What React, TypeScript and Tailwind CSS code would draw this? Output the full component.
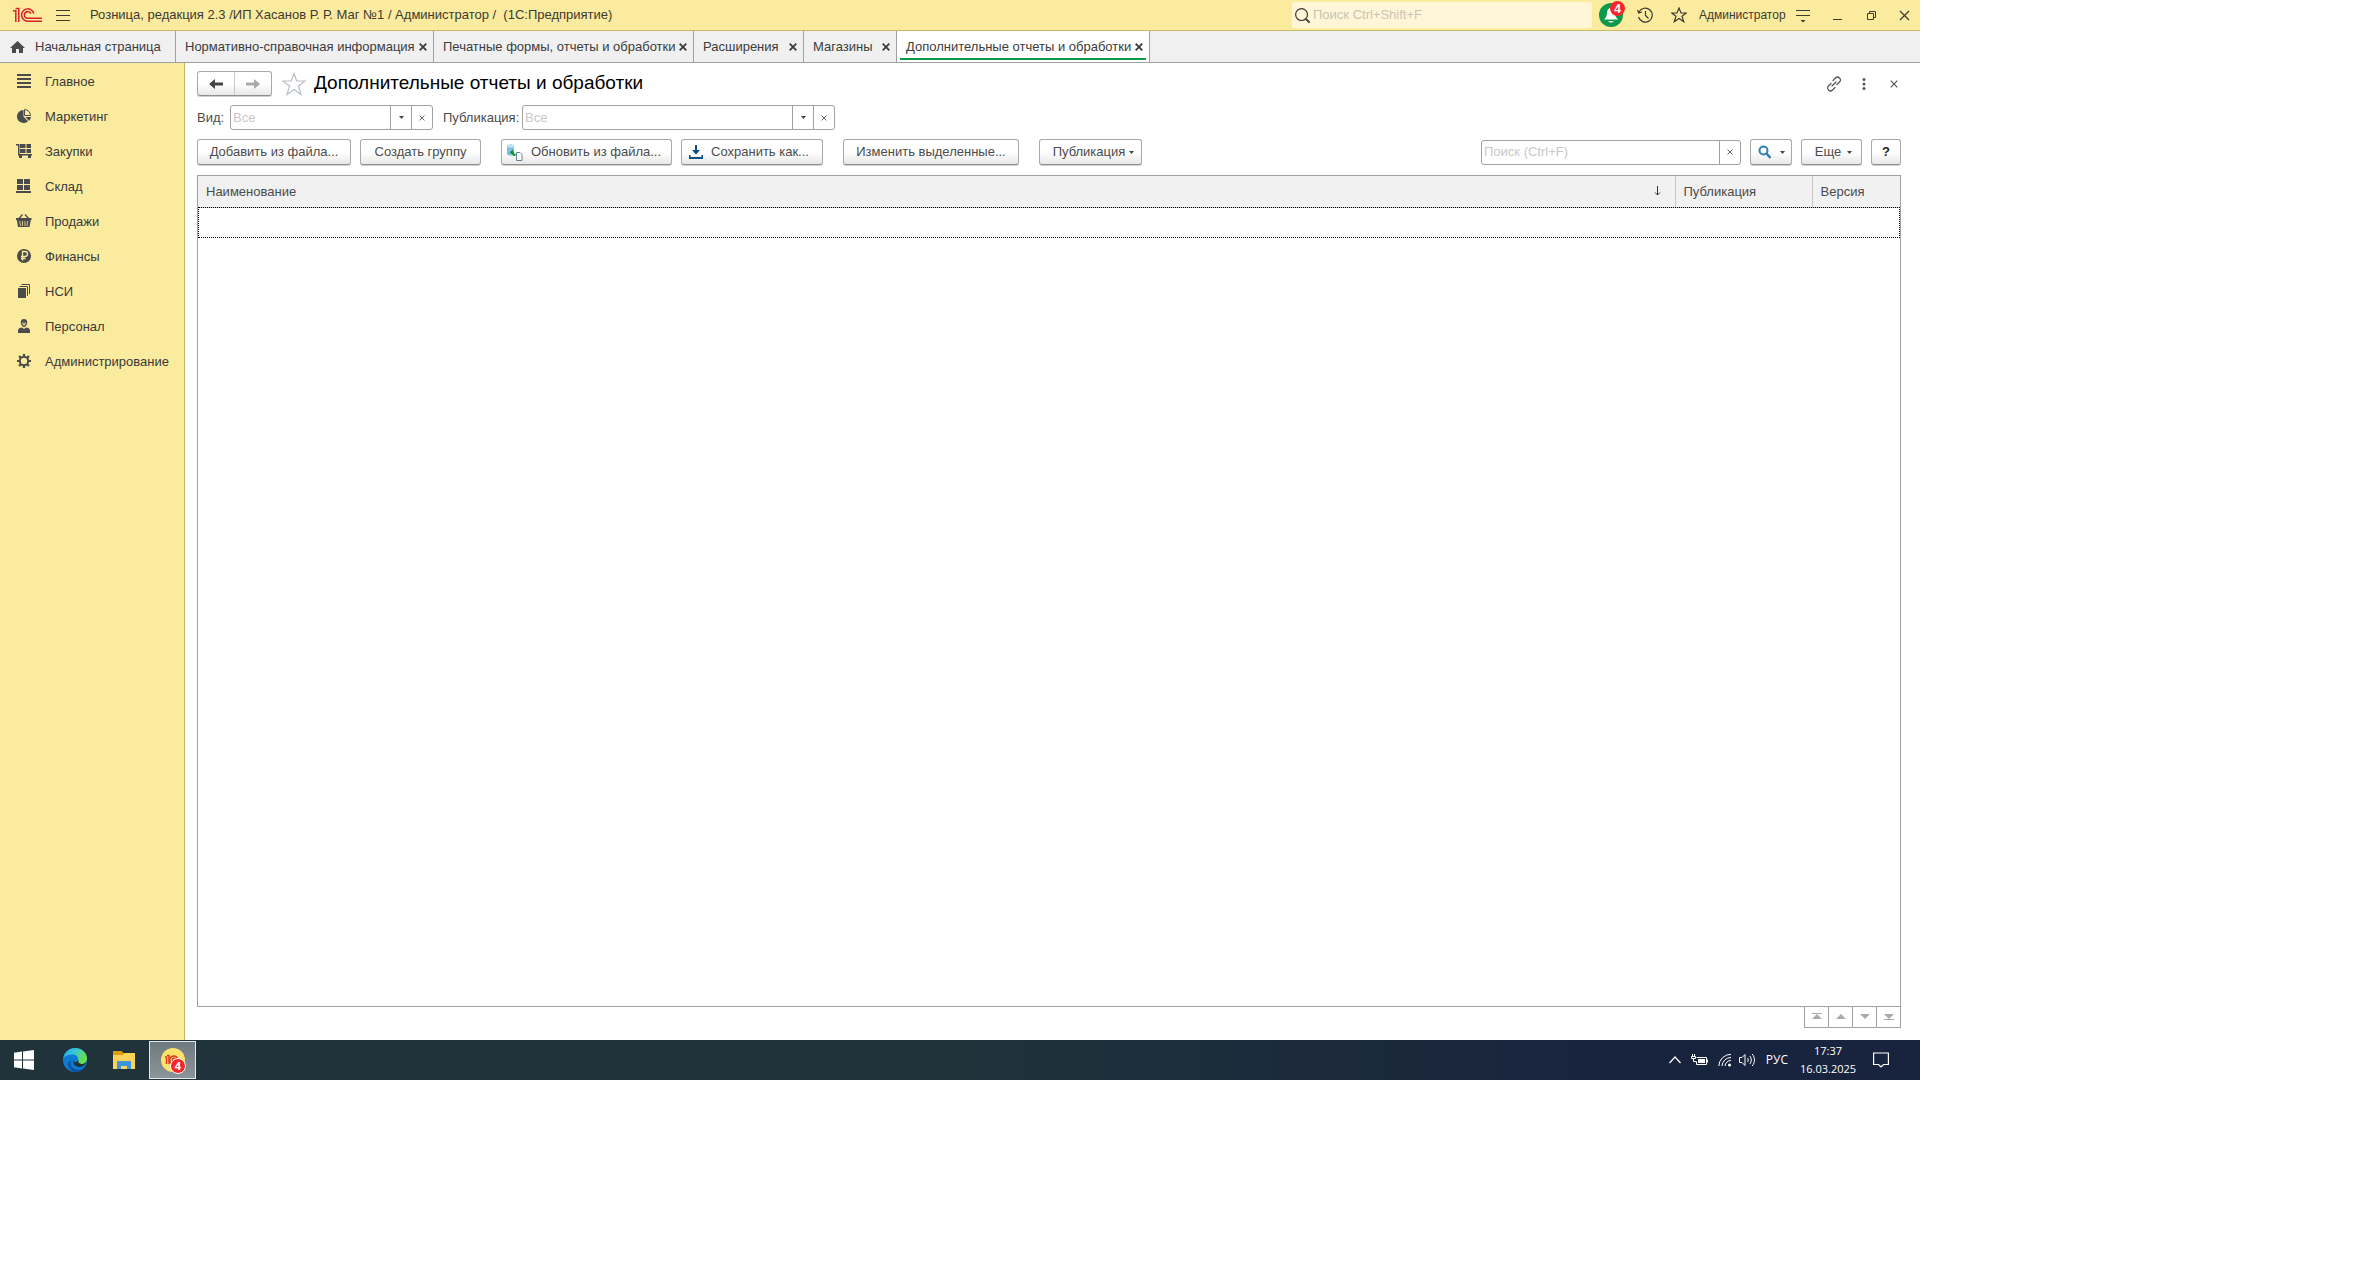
import { useState } from "react";
import type { ReactNode } from "react";

const MENU: { name: string; icon: ReactNode }[] = [
  {
    name: "Главное",
    icon: <path d="M1 1h14v2H1zM1 5h14v2H1zM1 9h14v2H1zM1 13h14v2H1z" />,
  },
  {
    name: "Маркетинг",
    icon: (
      <>
        <path d="M7.500 2A6.500 6.500 0 1 0 12 13.200L7.500 8.500z" />
        <path d="M8.500 1.500v6h6a6 6 0 0 0-6-6z" fill="none" stroke="currentColor" />
        <path d="M9.500 9H15a6 6 0 0 1-2 4z" />
      </>
    ),
  },
  {
    name: "Закупки",
    icon: (
      <path d="M0 1h3.500v10H16v1.500H2V2.500H0zM4 1h5.500v4H4zM10.500 1H15v4h-4.500zM4 6h5.500v4H4zM10.500 6H15v4h-4.500zM3 12.500h3V15H3zM12 12.500h3V15h-3z" />
    ),
  },
  {
    name: "Склад",
    icon: <path d="M1 1h6v5H1zM8 1h6v5H8zM1 7h6v5H1zM8 7h6v5H8zM0 13h15v2H0z" />,
  },
  {
    name: "Продажи",
    icon: (
      <>
        <path d="M3 5.500 6.500 1.500M12.500 5.500 9 1.500" fill="none" stroke="currentColor" strokeWidth="1.300" />
        <path d="M0 5h15.500v2h-.7l-1.300 7H2L.8 7H0z" />
        <path d="M3.800 8l.7 5M6.500 8v5M9 8v5M11.700 8l-.7 5" stroke="#fbeb9e" strokeWidth=".8" />
      </>
    ),
  },
  {
    name: "Финансы",
    icon: (
      <>
        <circle cx="8" cy="8" r="7" />
        <path d="M6.500 12.500v-9H9a2.400 2.400 0 0 1 0 5H5M5 10.500h4.500" fill="none" stroke="#fbeb9e" strokeWidth="1.300" />
      </>
    ),
  },
  {
    name: "НСИ",
    icon: (
      <>
        <path d="M2 5h8v10H2z" />
        <path d="M3.500 3.500h8V13M5.500 1.500h8V11" fill="none" stroke="currentColor" />
      </>
    ),
  },
  {
    name: "Персонал",
    icon: (
      <>
        <path d="M8 1c2 0 3.200 1.200 3.200 3.200S9.800 9 8 9 4.800 6.200 4.800 4.200 6 1 8 1z" />
        <path d="M2 15v-2.500c0-2 2-2.700 4-3l2 1.500 2-1.500c2 .3 4 1 4 3V15z" />
        <path d="M6 4.500h4c0 2-1 3.500-2 3.500s-2-1.500-2-3.500z" fill="#fbeb9e" opacity=".6" />
      </>
    ),
  },
  {
    name: "Администрирование",
    icon: (
      <>
        <circle cx="8" cy="8" r="4.200" fill="none" stroke="currentColor" strokeWidth="2" />
        <path
          d="M8 1v2.500M8 12.500V15M1 8h2.500M12.500 8H15M3 3l1.800 1.800M11.200 11.200 13 13M13 3l-1.800 1.800M4.800 11.200 3 13"
          stroke="currentColor"
          strokeWidth="2.200"
        />
      </>
    ),
  },
];

const TABS = [
  { name: "Нормативно-справочная информация", width: "w-[258px]" },
  { name: "Печатные формы, отчеты и обработки", width: "w-[260px]" },
  { name: "Расширения", width: "w-[110px]" },
  { name: "Магазины", width: "w-[93px]" },
  { name: "Дополнительные отчеты и обработки", width: "w-[253px]" },
];

const SCROLL_BUTTONS = [
  { name: "В начало", d: "M3 3h10v1H3zM8 4l5 5H3z" },
  { name: "Вверх", d: "M8 4l5 5H3z" },
  { name: "Вниз", d: "M8 9l5-5H3z" },
  { name: "В конец", d: "M8 9l5-5H3zM3 9h10v1H3z" },
];

const BTN =
  "flex h-[26px] shrink-0 items-center justify-center rounded-[3px] border border-[#a9a9a9] border-b-[#8f8f8f] bg-linear-to-b from-white from-50% to-[#e8e8e8] text-[#4b4b4b] shadow-[0_1px_0_#cfcfcf]";

function Caret() {
  return (
    <svg className="h-[3px] w-[5px]" viewBox="0 0 5 3" fill="#444">
      <path d="M0 0h5L2.500 3z" />
    </svg>
  );
}

function Cross({ className = "size-[7px]", width = 1.2 }: { className?: string; width?: number }) {
  return (
    <svg className={className} viewBox="0 0 8 8" fill="none" stroke="currentColor" strokeWidth={width}>
      <path d="M.7.7l6.600 6.600M7.300.7.7 7.300" />
    </svg>
  );
}

function FilterField({ id, label, labelWidth, width }: { id: string; label: string; labelWidth: string; width: string }) {
  const [value, setValue] = useState("");
  return (
    <div className="flex items-center">
      <label htmlFor={id} className={`text-[#4b4b4b] ${labelWidth}`}>{label}</label>
      <div className={`flex h-[25px] rounded-[3px] border border-[#a0a0a0] bg-white ${width}`}>
        <input
          id={id}
          value={value}
          onChange={(e) => setValue(e.target.value)}
          placeholder="Все"
          className="min-w-0 flex-1 px-0.5 outline-none placeholder:text-[#c8c8c8]"
        />
        <button aria-label="Выбрать" className="flex w-[21px] items-center justify-center border-l border-[#a0a0a0]">
          <Caret />
        </button>
        <button
          aria-label="Очистить"
          onClick={() => setValue("")}
          className="flex w-[21px] items-center justify-center border-l border-[#a0a0a0] text-[#555]"
        >
          <Cross className="size-1.5" />
        </button>
      </div>
    </div>
  );
}

function TitleBar() {
  return (
    <header className="flex h-[31px] shrink-0 items-center border-b border-[#c9b96a] bg-[#fbeb9e] text-[#3d3a32]">
      {/* Логотип */}
      <svg className="ml-3 h-4 w-[31px]" viewBox="0 0 31 16" fill="none" stroke="#d8232a" strokeWidth="1.500">
        <path d="M1 3.800h2.800V15M3.500 1.500h3.300V15" />
        <path d="M21.800 6.500A6.200 6.200 0 1 0 15.600 14.200H30" />
        <path d="M18.800 6.800A3.300 3.300 0 1 0 15.600 11.200H30" />
      </svg>
      <button aria-label="Меню" className="ml-3">
        <svg className="h-4 w-4" viewBox="0 0 16 16" stroke="currentColor" strokeWidth="1.200">
          <path d="M1 3.500h14M1 8.500h14M1 13.500h14" />
        </svg>
      </button>
      <h1 className="ml-[19px] text-[13px] whitespace-pre">
        Розница, редакция 2.3 /ИП Хасанов Р. Р. Маг №1 / Администратор /  (1С:Предприятие)
      </h1>
      <div className="ml-auto flex h-[26px] w-[300px] items-center rounded-[3px] bg-[#fef6d6]">
        <svg className="ml-0.5 size-[17px]" viewBox="0 0 18 18" fill="none" stroke="currentColor" strokeWidth="1.300">
          <circle cx="8" cy="8" r="6.300" />
          <path d="m12.500 12.500 4 4" strokeWidth="2" />
        </svg>
        <input
          aria-label="Поиск"
          placeholder="Поиск Ctrl+Shift+F"
          className="min-w-0 flex-1 px-0.5 text-[13px] outline-none placeholder:text-[#c9c5b5]"
        />
      </div>
      <button aria-label="Уведомления" className="relative ml-[7px] size-6 rounded-full bg-[#0a9a4a]">
        <svg className="size-6" viewBox="0 0 24 24" fill="#fff">
          <path d="M12 5c3 0 3.800 2.500 4 5 .2 3 1 4.500 3 6.500H5c2-2 2.800-3.500 3-6.500.2-2.500 1-5 4-5zM9.500 18h5c-.5 2-4.500 2-5 0z" />
        </svg>
        <span className="absolute -top-0.5 -right-0.5 flex size-[15px] items-center justify-center rounded-full bg-[#f8262b] text-[12px] font-bold text-white">
          4
        </span>
      </button>
      <button aria-label="История" className="ml-3.5">
        <svg className="size-4" viewBox="0 0 16 16" fill="none" stroke="currentColor" strokeWidth="1.200">
          <path d="M2 5a7 7 0 1 1-.5 5M.5 3l1.300 3 3-1M8.500 4v4.500l3 3" />
        </svg>
      </button>
      <button aria-label="Избранное" className="ml-[18px]">
        <svg className="size-4" viewBox="0 0 16 16" fill="none" stroke="currentColor" strokeWidth="1.200">
          <path d="m8 1 2 5h5.300l-4.300 3.300 1.700 5.400L8 11.500l-4.700 3.200L5 9.300.7 6H6z" />
        </svg>
      </button>
      <span className="ml-3 w-[84px] text-xs">Администратор</span>
      <button aria-label="Настройки" className="ml-3">
        <svg className="size-4" viewBox="0 0 16 16" fill="none" stroke="currentColor" strokeWidth="1.200">
          <path d="M1 3.500h14M1 8.500h14" />
          <path d="M5.500 13h5L8 15.500z" fill="currentColor" stroke="none" />
        </svg>
      </button>
      <button aria-label="Свернуть" className="ml-[21px]">
        <svg className="size-3" viewBox="0 0 12 12" stroke="currentColor">
          <path d="M1 10.500h9" />
        </svg>
      </button>
      <button aria-label="Восстановить" className="ml-[22px]">
        <svg className="size-3" viewBox="0 0 12 12" fill="none" stroke="currentColor">
          <path d="M1.500 4.500h6v6h-6zM3.500 4V2.500h6v6H8" />
        </svg>
      </button>
      <button aria-label="Закрыть" className="mr-2.5 ml-[21px]">
        <Cross className="size-[11px]" width={0.9} />
      </button>
    </header>
  );
}

function TabBar() {
  return (
    <nav className="flex h-8 shrink-0 border-b border-[#a0a0a0] bg-[#f0f0f0] text-[#3c3c3c]">
      <a href="#home" className="flex w-44 items-center border-r border-[#a0a0a0] pl-2.5">
        <svg className="h-3.5 w-[15px]" viewBox="0 0 15 14" fill="#4b4b4b">
          <path d="M7.500 1 15 8h-2v5H9V9H6v4H2V8H0z" />
        </svg>
        <span className="ml-2.5">Начальная страница</span>
      </a>
      {TABS.map((tab, i) => {
        const active = i === TABS.length - 1;
        return (
          <div
            key={tab.name}
            className={`relative flex shrink-0 items-center justify-between border-r border-[#a0a0a0] pr-1.5 pl-[9px] ${tab.width} ${active ? "bg-white" : ""}`}
          >
            <a href="#tab" className="whitespace-nowrap">{tab.name}</a>
            <button aria-label="Закрыть вкладку">
              <Cross className="size-2" width={1.8} />
            </button>
            {active && <span className="absolute inset-x-[3px] bottom-[2px] h-0.5 bg-[#0a9a4a]" />}
          </div>
        );
      })}
    </nav>
  );
}

function Sidebar() {
  return (
    <aside className="w-[185px] shrink-0 border-r border-[#c4b565] bg-[#fbeb9e] pt-px">
      {MENU.map((item) => (
        <a key={item.name} href="#section" className="flex h-[35px] items-center pl-4 text-[#3a3a3a]">
          <svg className="h-[17px] w-4 text-[#4b4b4b]" viewBox="0 0 16 17" fill="currentColor">
            {item.icon}
          </svg>
          <span className="ml-[13px]">{item.name}</span>
        </a>
      ))}
    </aside>
  );
}

function FormHeader() {
  return (
    <div className="flex h-[25px] items-center">
      <div className="flex h-[25px] w-[75px] rounded-[3px] border border-[#a9a9a9] border-b-[#8f8f8f] bg-linear-to-b from-white from-50% to-[#e8e8e8] shadow-[0_1px_0_#cfcfcf]">
        <button aria-label="Назад" className="flex flex-1 items-center justify-center border-r border-[#c8c8c8] text-[#444]">
          <svg className="h-3 w-3.5" viewBox="0 0 14 12" fill="currentColor">
            <path d="M0 6l6-5v3.500h8v3H6V11z" />
          </svg>
        </button>
        <button aria-label="Вперед" className="flex flex-1 items-center justify-center text-[#a9a9a9]">
          <svg className="h-3 w-3.5" viewBox="0 0 14 12" fill="currentColor">
            <path d="M14 6 8 1v3.500H0v3h8V11z" />
          </svg>
        </button>
      </div>
      <button aria-label="В избранное" className="ml-2.5">
        <svg className="size-6" viewBox="0 0 24 24" fill="none" stroke="#b9bec4" strokeWidth="1.200">
          <path d="m12 1.500 2.700 7.500H23l-6.500 5 2.500 8.500-7-5-7 5L7.500 14 1 9h8.300z" />
        </svg>
      </button>
      <h2 className="ml-2 text-[19px] text-black">Дополнительные отчеты и обработки</h2>
      <div className="mr-[3px] ml-auto flex items-center text-[#555]">
        <button aria-label="Ссылка">
          <svg className="size-4" viewBox="0 0 16 16" fill="none" stroke="currentColor" strokeWidth="1.200" strokeLinecap="round">
            <path d="M7 4.500 9.500 2a2.700 2.700 0 0 1 4 4L11 8.500M9 11.500 6.500 14a2.700 2.700 0 0 1-4-4L5 7.500M6 10l4-4" />
          </svg>
        </button>
        <button aria-label="Еще" className="ml-5">
          <svg className="h-3.5 w-1" viewBox="0 0 4 14" fill="currentColor">
            <circle cx="2" cy="2.500" r="1.500" />
            <circle cx="2" cy="7" r="1.500" />
            <circle cx="2" cy="11.500" r="1.500" />
          </svg>
        </button>
        <button aria-label="Закрыть форму" className="ml-6">
          <Cross className="size-2" />
        </button>
      </div>
    </div>
  );
}

function Toolbar() {
  const [query, setQuery] = useState("");
  return (
    <div className="mt-[9px] flex items-center">
      <button className={`${BTN} w-[154px]`}>Добавить из файла...</button>
      <button className={`${BTN} ml-[9px] w-[121px]`}>Создать группу</button>
      <button className={`${BTN} ml-5 w-[171px] pr-1.5`}>
        <svg className="mr-2 size-[17px]" viewBox="0 0 17 17">
          <path d="M1 2c0-2 7-2 7 0v8c0 2-7 2-7 0z" fill="#7cc0e8" />
          <ellipse cx="4.500" cy="2.200" rx="3.500" ry="1.300" fill="#c4e5f7" />
          <path d="M3.500 8.500 7 5.500V7.500h1v2h1.500V12H7V11z" fill="#149a2c" />
          <path d="M10.500 8.500h3.500l2 2v6h-5.500z" fill="#fff" stroke="#6b8299" />
        </svg>
        Обновить из файла...
      </button>
      <button className={`${BTN} ml-[9px] w-[142px] pr-1.5`}>
        <svg className="mr-2 h-3.5 w-3.5" viewBox="0 0 14 14" fill="#0b4f86">
          <path d="M6 0h2v5h3L7 9.500 3 5h3zM0 10h1.500v2h11v-2H14v4H0z" />
        </svg>
        Сохранить как...
      </button>
      <button className={`${BTN} ml-5 w-[176px]`}>Изменить выделенные...</button>
      <button className={`${BTN} ml-5 w-[103px] gap-1 pl-1.5`}>
        Публикация <Caret />
      </button>
      <div className="ml-auto flex h-[25px] w-[260px] rounded-[3px] border border-[#a0a0a0] bg-white">
        <input
          aria-label="Поиск в списке"
          value={query}
          onChange={(e) => setQuery(e.target.value)}
          placeholder="Поиск (Ctrl+F)"
          className="min-w-0 flex-1 px-0.5 outline-none placeholder:text-[#c8c8c8]"
        />
        <button
          aria-label="Очистить поиск"
          onClick={() => setQuery("")}
          className="flex w-[21px] items-center justify-center border-l border-[#a0a0a0] text-[#555]"
        >
          <Cross className="size-1.5" />
        </button>
      </div>
      <button aria-label="Найти" className={`${BTN} ml-[9px] w-[42px] gap-2`}>
        <svg className="size-3.5" viewBox="0 0 14 14" fill="none" stroke="#2f7fb5" strokeWidth="2">
          <circle cx="5.500" cy="5.500" r="4" />
          <path d="m8.500 8.500 4 4.500" strokeWidth="2.500" />
        </svg>
        <Caret />
      </button>
      <button className={`${BTN} ml-[9px] w-[61px] gap-1.5 pl-1`}>
        Еще <Caret />
      </button>
      <button aria-label="Справка" className={`${BTN} ml-[9px] w-[30px] font-bold text-[#222]`}>?</button>
    </div>
  );
}

function ReportsTable() {
  return (
    <div className="mt-2.5 flex-1 border border-[#a0a0a0] bg-white">
      <table className="w-full table-fixed border-collapse text-left text-[#4b4b4b]">
        <thead>
          <tr className="h-[31px] border-b border-[#c8c8c8] bg-[#f1f1f1]">
            <th className="pl-2 font-normal">
              <div className="flex items-center justify-between pr-3.5">
                Наименование
                <svg className="h-2.5 w-[7px]" viewBox="0 0 7 10" fill="none" stroke="#333">
                  <path d="M3.500 0v9M1 6.500 3.500 9 6 6.500" />
                </svg>
              </div>
            </th>
            <th className="w-[137px] border-l border-[#c8c8c8] pl-2 font-normal">Публикация</th>
            <th className="w-[88px] border-l border-[#c8c8c8] pl-2 font-normal">Версия</th>
          </tr>
        </thead>
        <tbody>
          <tr className="h-[31px] outline-1 -outline-offset-1 outline-black outline-dotted">
            <td colSpan={3} />
          </tr>
        </tbody>
      </table>
    </div>
  );
}

function Taskbar() {
  return (
    <footer className="flex h-10 shrink-0 items-center bg-linear-to-r from-[#20323a] from-50% to-[#18233d] to-85% font-['Open_Sans','Noto_Sans',sans-serif] text-xs text-white">
      <button aria-label="Пуск" className="flex w-12 justify-center">
        <svg className="size-5" viewBox="0 0 20 20" fill="#fff">
          <path d="M0 2.800 8 1.600V9.500H0zM9 1.500 20 0v9.500H9zM0 10.500h8v7.900L0 17.200zM9 10.500h11V20L9 18.500z" />
        </svg>
      </button>
      <button aria-label="Edge" className="ml-[15px]">
        <svg className="size-6" viewBox="0 0 24 24">
          <defs>
            <linearGradient id="edgeTop" x1="0" y1="0" x2="1" y2="0.4">
              <stop offset="0" stopColor="#27a8e8" />
              <stop offset="0.500" stopColor="#38c6d8" />
              <stop offset="1" stopColor="#67e04a" />
            </linearGradient>
          </defs>
          <circle cx="12" cy="12" r="12" fill="#0c7bd3" />
          <path d="M.3 10.500C1.500 4 6.500 0 12 0c7 0 12 5 12 10.500 0 3.500-2.500 5.500-5.500 5.500-3 0-4.500-1-4.500-2s1-1.200 1-3c0-2.500-2-4.500-5.500-4.500-4 0-7.500 1.500-9.200 4z" fill="url(#edgeTop)" />
          <path d="M8.500 12c-1.500 2-1 5.500 1 7.500 3 3 8.500 3 12 0-2 3-5.500 4.500-9.500 4.500-4-1-7-4-7-7.500 0-2 1.500-4 3.500-4.500z" fill="#1050a0" />
          <path d="M14 14c0-1 1-1.200 1-3 1 3-.5 4 3.500 5 2 0 3.500-.5 4.500-2-.5 3-3.500 5-6.500 5-4 0-7-3-6-7 .3 2 1.500 2.500 3.500 2z" fill="#20323a" />
        </svg>
      </button>
      <button aria-label="Проводник" className="ml-[26px]">
        <svg className="h-5 w-[22px]" viewBox="0 0 22 20">
          <path d="M0 1h8.500l2 2H22v4H0z" fill="#dc9c0c" />
          <path d="M0 5h10l1.500-2H22v16H0z" fill="#ffd35a" />
          <path d="M4 19v-8h14v8h-4v-3H8v3z" fill="#3a95dc" />
        </svg>
      </button>
      <button
        aria-label="1С:Предприятие"
        className="relative ml-3.5 flex h-[38px] w-[47px] items-center justify-center border border-[#e4e8ea] bg-linear-to-b from-[#6f7a80] to-[#8b9499]"
      >
        <svg className="size-6" viewBox="0 0 24 24" fill="none" stroke="#dc3a22" strokeWidth="1.500">
          <circle cx="12" cy="12" r="12" fill="#fbe36a" stroke="none" />
          <path d="M4 9h1.500v7M6 7.500h2V16M16.500 10.500A4 4 0 1 0 13 16h7M14.500 11a1.700 1.700 0 1 0-1.500 2.500h6" />
        </svg>
        <span className="absolute right-[9px] bottom-1 flex size-4 items-center justify-center rounded-full border border-white bg-[#f8262b] text-[11px] font-bold">
          4
        </span>
      </button>
      <button aria-label="Скрытые значки" className="ml-auto">
        <svg className="size-3" viewBox="0 0 12 12" fill="none" stroke="#fff" strokeWidth="1.200">
          <path d="m.5 9 5.500-6 5.500 6" />
        </svg>
      </button>
      <svg className="ml-2.5 h-3 w-[17px]" viewBox="0 0 17 12" fill="none" stroke="#fff">
        <path d="M5.500 3.500h10v7h-10v-3M16.500 5.500v3M1.500 0v2M3.500 0v2M.5 2.500h4v2h-4zM2.500 5v2.500h3" />
        <path d="M7 5h7v4H7z" fill="#fff" stroke="none" />
      </svg>
      <svg className="ml-2.5 size-3.5" viewBox="0 0 14 14" fill="none" stroke="#fff">
        <path d="M.8 13A12.200 12.200 0 0 1 13 1.300M4 13a9 9 0 0 1 9-8.500M7 13a6 6 0 0 1 6-5.500" />
        <circle cx="11.500" cy="12" r="1.500" fill="#fff" stroke="none" />
      </svg>
      <svg className="ml-[7px] h-3.5 w-[17px]" viewBox="0 0 17 14" fill="none" stroke="#fff">
        <path d="M.5 4.500h2.500l3-3v11l-3-3H.5zM8.500 5c1 1 1 3 0 4M10.800 3c2 2 2 6 0 8M13.200 1c3 3.500 3 8.500 0 12" />
      </svg>
      <span className="ml-2.5">РУС</span>
      <div className="ml-[9px] w-[62px] text-center text-[11px] leading-[18px]">
        <div>17:37</div>
        <div>16.03.2025</div>
      </div>
      <button aria-label="Центр уведомлений" className="mr-[31px] ml-3.5">
        <svg className="size-4" viewBox="0 0 16 16" fill="none" stroke="#fff" strokeWidth="1.200">
          <path d="M.6 1h14.800v11.500H10.500L8 15l-2.500-2.500H.6z" />
        </svg>
      </button>
    </footer>
  );
}

export default function App() {
  return (
    <div className="min-h-screen bg-white">
      <div className="flex h-screen max-h-[1080px] w-full max-w-[1920px] flex-col font-['Liberation_Sans',Arial,sans-serif] text-[13px]">
        <TitleBar />
        <TabBar />
        <div className="flex min-h-0 flex-1">
          <Sidebar />
          <main className="flex min-w-0 flex-1 flex-col px-3 pt-2 pr-[19px]">
            <FormHeader />
            <div className="mt-[9px] flex gap-2.5">
              <FilterField id="vid" label="Вид:" labelWidth="w-[33px]" width="w-[203px]" />
              <FilterField id="publikaciya" label="Публикация:" labelWidth="w-[79px]" width="w-[313px]" />
            </div>
            <Toolbar />
            <ReportsTable />
            <div className="mb-3 flex justify-end">
              {SCROLL_BUTTONS.map((b) => (
                <button
                  key={b.name}
                  aria-label={b.name}
                  className="-ml-px flex h-[21px] w-[25px] items-center justify-center border border-t-0 border-[#a0a0a0]"
                >
                  <svg className="h-3.5 w-4" viewBox="0 0 16 14" fill="#a9a9a9">
                    <path d={b.d} />
                  </svg>
                </button>
              ))}
            </div>
          </main>
        </div>
        <Taskbar />
      </div>
    </div>
  );
}
